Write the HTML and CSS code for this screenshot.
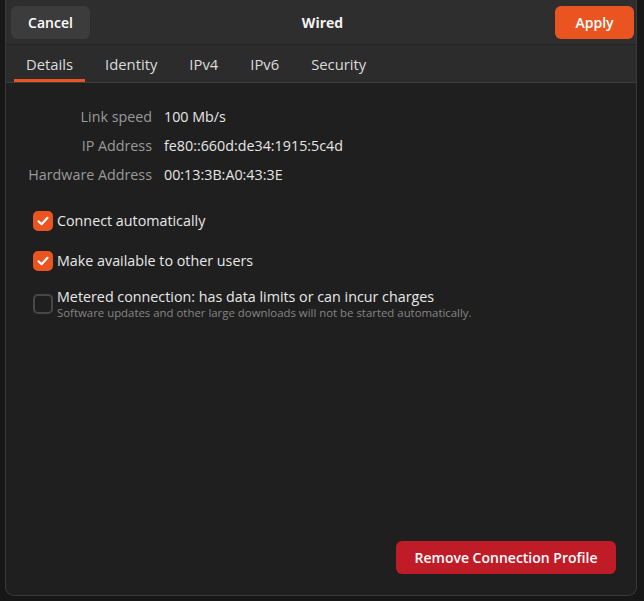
FILE: index.html
```html
<!DOCTYPE html>
<html>
<head>
    <meta charset="utf-8" />
    <title>Wired</title>
    <link rel="stylesheet" href="styles.css">
</head>
<body>
    <div class="window">
        <div class="header-bar">
            <button class="btn btn-cancel">Cancel</button>
            <div class="title">Wired</div>
            <button class="btn btn-apply">Apply</button>
        </div>

        <div class="tab-bar">
            <div class="tab active">Details</div>
            <div class="tab">Identity</div>
            <div class="tab">IPv4</div>
            <div class="tab">IPv6</div>
            <div class="tab">Security</div>
        </div>

        <div class="content">
            <div class="info-grid">
                <div class="info-label">Link speed</div>
                <div class="info-value">100 Mb/s</div>
                <div class="info-label">IP Address</div>
                <div class="info-value">fe80::660d:de34:1915:5c4d</div>
                <div class="info-label">Hardware Address</div>
                <div class="info-value">00:13:3B:A0:43:3E</div>
            </div>

            <div class="check-list">
                <div class="check-row">
                    <span class="check checked">
                        <svg width="14" height="14" viewBox="0 0 14 14"><path d="M2.5 7.3 L5.6 10.2 L11.5 3.8" fill="none" stroke="#fff" stroke-width="2.2" stroke-linecap="round" stroke-linejoin="round"/></svg>
                    </span>
                    <span class="check-text">Connect automatically</span>
                </div>
                <div class="check-row">
                    <span class="check checked">
                        <svg width="14" height="14" viewBox="0 0 14 14"><path d="M2.5 7.3 L5.6 10.2 L11.5 3.8" fill="none" stroke="#fff" stroke-width="2.2" stroke-linecap="round" stroke-linejoin="round"/></svg>
                    </span>
                    <span class="check-text">Make available to other users</span>
                </div>
                <div class="check-row metered">
                    <span class="check"></span>
                    <div>
                        <div class="check-text">Metered connection: has data limits or can incur charges</div>
                        <div class="check-sub">Software updates and other large downloads will not be started automatically.</div>
                    </div>
                </div>
            </div>

            <div class="footer">
                <button class="btn btn-remove">Remove Connection Profile</button>
            </div>
        </div>
    </div>
</body>
</html>
```

FILE: styles.css
```css
* {
    margin: 0px;
    padding: 0px;
    box-sizing: border-box;
}

body {
    background-color: #171717;
    font-family: "Open Sans", "Noto Sans", sans-serif;
    font-size: 14px;
    color: #ffffff;
}

.window {
    margin-left: 5px;
    width: 632px;
    height: 596px;
    border: 1px solid #3a3a3a;
    border-top: none;
    border-radius: 0px 0px 9px 9px;
    background-color: #1f1f1f;
    display: flex;
    flex-direction: column;
    overflow: hidden;
}

.header-bar {
    height: 45px;
    background-color: #2e2e2e;
    border-bottom: 1px solid #232323;
    display: flex;
    align-items: center;
    justify-content: space-between;
    padding: 0px 2px 0px 5px;
}

.btn {
    font-family: inherit;
    font-weight: 600;
    font-size: 14px;
    border: none;
    border-radius: 6px;
    color: #ffffff;
}

.btn-cancel {
    width: 79px;
    height: 33px;
    background-color: #3c3c3c;
}

.btn-apply {
    width: 79px;
    height: 33px;
    background-color: #e95420;
}

.title {
    font-weight: 700;
    font-size: 14px;
    color: #f2f2f2;
}

.tab-bar {
    height: 38px;
    background-color: #2c2c2c;
    border-bottom: 1px solid #3c3c3c;
    display: flex;
    padding-left: 8px;
}

.tab {
    height: 37px;
    padding: 4px 12px 0px 12px;
    margin-right: 8px;
    display: flex;
    align-items: center;
    color: #dcdcdc;
    font-size: 14.8px;
    border-bottom: 3px solid transparent;
}

.tab.active {
    border-bottom-color: #e95420;
}

.content {
    flex: 1;
    display: flex;
    flex-direction: column;
    padding: 24px 20px 20px 18px;
}

.info-grid {
    display: grid;
    grid-template-columns: 128px auto;
    column-gap: 12px;
    row-gap: 9px;
    line-height: 20px;
    font-size: 14.3px;
    white-space: nowrap;
}

.info-label {
    text-align: right;
    color: #9a9a9a;
}

.info-value {
    color: #e6e6e6;
}

.check-list {
    margin-top: 26px;
    padding-left: 9px;
}

.check-row {
    display: flex;
    align-items: center;
    margin-bottom: 20px;
}

.check-row:nth-child(2) {
    margin-bottom: 17px;
}

.check {
    width: 20px;
    height: 20px;
    border-radius: 5px;
    border: 2px solid #474747;
    display: flex;
    align-items: center;
    justify-content: center;
    margin-right: 4px;
    flex-shrink: 0;
}

.check.checked {
    background-color: #e95420;
    border-color: #e95420;
}

.check-text {
    color: #e8e8e8;
    font-size: 14.3px;
    line-height: 20px;
}

.check-sub {
    color: #858585;
    font-size: 11.4px;
    line-height: 13px;
}

.metered .check-text {
    line-height: 18px;
}

.footer {
    margin-top: auto;
    display: flex;
    justify-content: flex-end;
}

.btn-remove {
    width: 220px;
    height: 33px;
    background-color: #c01c28;
    margin-bottom: 1px;
}
```
